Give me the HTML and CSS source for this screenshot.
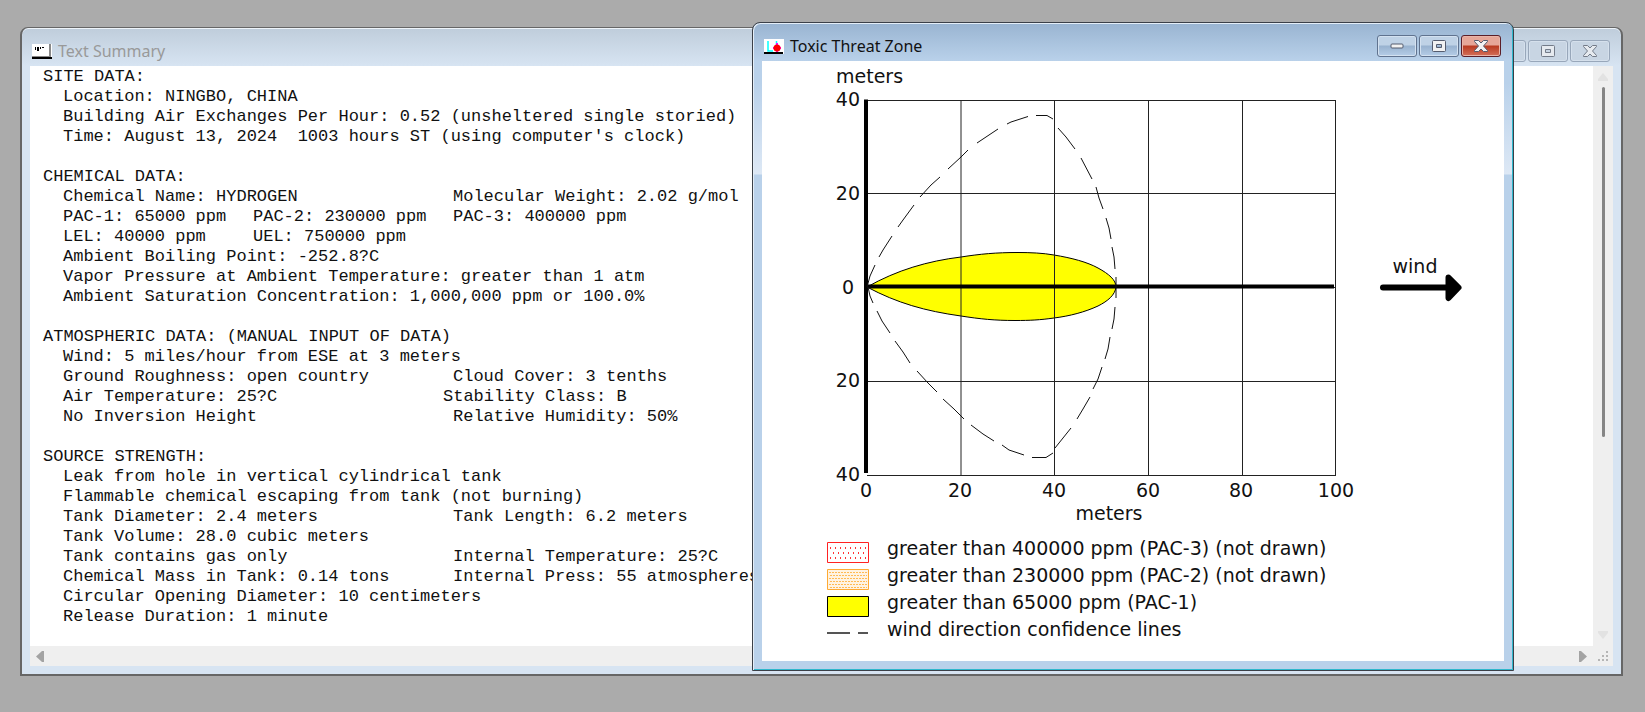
FILE: index.html
```html
<!DOCTYPE html>
<html lang="en">
<head>
<meta charset="utf-8">
<title>Toxic Threat Zone</title>
<link rel="stylesheet" href="styles.css">
</head>
<body>
<main class="desktop">
  <section class="window window-text">
    <header class="titlebar">
      <svg class="app-icon" width="20" height="15" viewBox="0 0 20 15" aria-hidden="true">
        <path fill="#fff" d="M0 0h20v15H0z"/><path fill="#888" d="M17 0h2v13H0v-1h17z"/><path fill="#000" d="M0 13h20v2H0zM3 3h1v3H3zM5 3h2v4H5zM8 3h1v2H8zM10 3h2v1h-2z"/>
      </svg>
      <h1 class="title">Text Summary</h1>
      <div class="controls">
        <button class="control" type="button" aria-label="Minimize"><svg width="14" height="6" viewBox="0 0 14 6"><rect class="glyph" x="1" y="1" width="12" height="4" rx="1"/></svg></button>
        <button class="control" type="button" aria-label="Maximize"><svg width="14" height="12" viewBox="0 0 14 12"><path class="glyph" fill-rule="evenodd" d="M1.500 .5h11q1 0 1 1v9q0 1-1 1h-11q-1 0-1-1v-9q0-1 1-1zM4.500 4.500h5v3h-5z"/></svg></button>
        <button class="control" type="button" aria-label="Close"><svg width="14" height="12" viewBox="0 0 14 12"><path class="glyph" d="M.5 .5h4L7 3l2.500-2.500h4v1L9.500 6l4 4.500v1h-4L7 9l-2.500 2.500h-4v-1L4.500 6l-4-4.500z"/></svg></button>
      </div>
    </header>
    <div class="client text-client">
      <article class="report">
        <h2>SITE DATA:</h2>
        <p>Location: NINGBO, CHINA</p>
        <p>Building Air Exchanges Per Hour: 0.52 (unsheltered single storied)</p>
        <p>Time: August 13, 2024&nbsp; 1003 hours ST (using computer's clock)</p>
        <h2>CHEMICAL DATA:</h2>
        <p><span class="wide">Chemical Name: HYDROGEN</span><span>Molecular Weight: 2.02 g/mol</span></p>
        <p><span class="first">PAC-1: 65000 ppm</span><span class="second">PAC-2: 230000 ppm</span><span>PAC-3: 400000 ppm</span></p>
        <p><span class="first">LEL: 40000 ppm</span><span>UEL: 750000 ppm</span></p>
        <p>Ambient Boiling Point: -252.8?C</p>
        <p>Vapor Pressure at Ambient Temperature: greater than 1 atm</p>
        <p>Ambient Saturation Concentration: 1,000,000 ppm or 100.0%</p>
        <h2>ATMOSPHERIC DATA: (MANUAL INPUT OF DATA)</h2>
        <p>Wind: 5 miles/hour from ESE at 3 meters</p>
        <p><span class="wide">Ground Roughness: open country</span><span>Cloud Cover: 3 tenths</span></p>
        <p><span class="wide wide-short">Air Temperature: 25?C</span><span>Stability Class: B</span></p>
        <p><span class="wide">No Inversion Height</span><span>Relative Humidity: 50%</span></p>
        <h2>SOURCE STRENGTH:</h2>
        <p>Leak from hole in vertical cylindrical tank</p>
        <p>Flammable chemical escaping from tank (not burning)</p>
        <p><span class="wide">Tank Diameter: 2.4 meters</span><span>Tank Length: 6.2 meters</span></p>
        <p>Tank Volume: 28.0 cubic meters</p>
        <p><span class="wide">Tank contains gas only</span><span>Internal Temperature: 25?C</span></p>
        <p><span class="wide">Chemical Mass in Tank: 0.14 tons</span><span>Internal Press: 55 atmospheres</span></p>
        <p>Circular Opening Diameter: 10 centimeters</p>
        <p>Release Duration: 1 minute</p>
      </article>
      <div class="vscroll">
        <svg width="10" height="8" viewBox="0 0 10 8"><path fill="#e2e2e2" d="M5 0l5 6v2H0V6z"/></svg>
        <div class="vtrack"><div class="vthumb"></div></div>
        <svg width="10" height="8" viewBox="0 0 10 8"><path fill="#e2e2e2" d="M5 8l5-6V0H0v2z"/></svg>
      </div>
      <div class="hscroll">
        <svg width="8" height="11" viewBox="0 0 8 11"><path fill="#a3a3a3" d="M0 5.500L6 0h2v11H6z"/></svg>
        <svg width="8" height="11" viewBox="0 0 8 11"><path fill="#a3a3a3" d="M8 5.500L2 0H0v11h2z"/></svg>
      </div>
      <div class="grip">
        <svg width="10" height="10" viewBox="0 0 10 10"><path fill="#b5b5b5" d="M8 0h2v2H8zM4 4h2v2H4zM8 4h2v2H8zM0 8h2v2H0zM4 8h2v2H4zM8 8h2v2H8z"/></svg>
      </div>
    </div>
  </section>

  <section class="window window-plot">
    <header class="titlebar">
      <svg class="app-icon" width="20" height="15" viewBox="0 0 20 15" aria-hidden="true">
        <path fill="#fff" d="M0 0h20v15H0z"/><path fill="none" stroke="#0ff" stroke-width="1.500" d="M4 2v10h5M12.500 2v4"/><path fill="#f0f" d="M12 4h2v10h-2zM9 8h8v2H9z"/><circle cx="13" cy="9" r="3.500" fill="#f00"/><path d="M0 13h19v2H0z"/>
      </svg>
      <h1 class="title">Toxic Threat Zone</h1>
      <div class="controls">
        <button class="control" type="button" aria-label="Minimize"><svg width="14" height="6" viewBox="0 0 14 6"><rect class="glyph" x="1" y="1" width="12" height="4" rx="1"/></svg></button>
        <button class="control" type="button" aria-label="Maximize"><svg width="14" height="12" viewBox="0 0 14 12"><path class="glyph" fill-rule="evenodd" d="M1.500 .5h11q1 0 1 1v9q0 1-1 1h-11q-1 0-1-1v-9q0-1 1-1zM4.500 4.500h5v3h-5z"/></svg></button>
        <button class="control control-close" type="button" aria-label="Close"><svg width="14" height="12" viewBox="0 0 14 12"><path class="glyph" d="M.5 .5h4L7 3l2.500-2.500h4v1L9.500 6l4 4.500v1h-4L7 9l-2.500 2.500h-4v-1L4.500 6l-4-4.500z"/></svg></button>
      </div>
    </header>
    <div class="client plot-client">
      <svg class="plot" viewBox="762 61 742 466" role="img" aria-label="Threat zone footprint in meters">
        <path fill="#ff0" stroke="#000" d="M867 287C897 270 928 261 961 257C980 254 996 252.500 1018 252.500C1030 252.500 1043 253 1054 255C1072 258 1087 262 1098 268C1109 274 1116 280 1116 287C1115 295 1108 301 1098 306C1085 312 1070 316 1054 318C1040 320 1030 320.500 1015 320.500C995 320.500 980 319 961 316C925 311 897 303 867 287Z"/>
        <path class="grid" d="M867 100.500H1336M867 193.500H1336M867 287.500H1336M867 381.500H1336M867 475.500H1336M961 100V475M1054.500 100V475M1148.500 100V475M1242.500 100V475M1335.500 100V475"/>
        <path fill="none" stroke="#000" stroke-width="4" d="M866 99.500V473M866 286.500H1334"/>
        <path fill="none" stroke="#111" d="M867 287L870 276L875 265M879 257L883 250L892 236M898 227L903 220L914 205M920 197L931 185L940 177M948 169L961 157L968 150M977 143L998 129M1007 124L1011 122L1028 116.500M1036 115.500H1047L1053 119M1058 128L1066 137L1075 149M1081 158L1092 179M1096 187L1099 198L1103 209M1106 218L1109 228L1111 239M1112 247L1114 257L1115 269M1116 277V298M868 287L870 296L873 303M877 311L882 321L890 333M895 341L903 352L910 363M917 371L928 383L937 392M943 399L954 409L964 419M971 425L983 434L994 441M1002 445L1009 450L1024 455M1032 457.500H1046L1053 453M1055 448L1071 428M1077 419L1083 409L1090 397M1093 389L1098 379L1102 367M1105 359L1108 349L1110 337M1112 329L1114 319L1115 307"/>
        <g class="label">
          <text x="836" y="83">meters</text>
          <text x="860" y="106" text-anchor="end">40</text>
          <text x="860" y="200" text-anchor="end">20</text>
          <text x="854" y="294" text-anchor="end">0</text>
          <text x="860" y="387" text-anchor="end">20</text>
          <text x="860" y="481" text-anchor="end">40</text>
          <g text-anchor="middle">
            <text x="866" y="497">0</text>
            <text x="960" y="497">20</text>
            <text x="1054" y="497">40</text>
            <text x="1148" y="497">60</text>
            <text x="1241" y="497">80</text>
            <text x="1336" y="497">100</text>
            <text x="1109" y="520">meters</text>
            <text x="1415" y="273">wind</text>
          </g>
        </g>
        <path fill="none" stroke="#000" stroke-width="6" stroke-linecap="round" d="M1383 287.500H1448"/>
        <path stroke="#000" stroke-width="6" stroke-linejoin="round" d="M1448.500 277.500L1458.500 287.500L1448.500 298Z"/>
      </svg>
      <ul class="legend">
        <li><svg class="swatch" width="42" height="21" viewBox="0 0 42 21"><path fill="none" stroke="#f33" stroke-width="2" stroke-dasharray="1 4" d="M3 6H40M6 11H38M3 16H40"/><path fill="none" stroke="#f22" d="M.5 .5h41v20H.5z"/></svg>greater than 400000 ppm (PAC-3) (not drawn)</li>
        <li><svg class="swatch" width="42" height="21" viewBox="0 0 42 21"><path fill="#fff3e2" stroke="#fa3" d="M.5 .5h41v20H.5z"/><path fill="none" stroke="#fb5" stroke-dasharray="2 1" d="M2 3.500H40M3 6.500H40M2 9.500H40M3 12.500H40M2 15.500H40M3 18.500H40"/></svg>greater than 230000 ppm (PAC-2) (not drawn)</li>
        <li><svg class="swatch" width="42" height="21" viewBox="0 0 42 21"><path fill="#ff0" stroke="#000" d="M.5 .5h41v20H.5z"/></svg>greater than 65000 ppm (PAC-1)</li>
        <li><svg class="swatch" width="42" height="2" viewBox="0 0 42 2"><path fill="#555" d="M0 0h23v2H0zM31 0h10v2H31z"/></svg>wind direction confidence lines</li>
      </ul>
    </div>
  </section>
</main>
</body>
</html>
```
FILE: styles.css
```css
* { box-sizing: border-box; }
body { margin: 0; background: #ababab; color: #111; }
h1, h2, p, ul { margin: 0; padding: 0; font-weight: normal; }

.desktop { position: relative; height: 100vh; min-height: 712px; overflow: hidden; }

.window {
  position: absolute;
  display: flex;
  flex-direction: column;
  padding: 0 8px 8px;
  border: 2px solid #666;
  border-radius: 8px 8px 0 0;
}
.window-text {
  inset: 27px 22px 36px 20px;
  border-width: 1px 2px 2px;
  background: linear-gradient(#bfcddb, #d7e4f2 38px);
  box-shadow: inset 0 1px #eef4fa;
}
.window-plot {
  inset: 22px 131px 41px 752px;
  border-color: #3b4048;
  border-width: 1px;
  padding: 0 9px 9px;
  background: linear-gradient(#99b4d1, #b9d1ea 38px, #b9d1ea 60px, #dde8f5 151px, #b9d1ea 152px);
  box-shadow: inset 1px 1px #e4eef8, inset -1px -1px #2fb7cc;
}

.titlebar { display: flex; align-items: center; gap: 6px; height: 38px; flex: none; padding: 8px 3px 0 2px; }
.title { flex: 1; font: 16px "Noto Sans", sans-serif; }
.window-text .title { color: #999; }
.window-plot .title { color: #111; }
.app-icon { flex: none; }
.controls { display: flex; gap: 2px; align-self: flex-start; padding-top: 4px; }
.control {
  display: flex;
  align-items: center;
  justify-content: center;
  width: 40px;
  height: 22px;
  padding: 0;
  border: 1px solid #60738f;
  border-radius: 3px;
  background: linear-gradient(#bfd2e6 45%, #98b2cf 50%, #b5cde7);
  box-shadow: inset 0 0 0 1px #d3e1f0;
}
.window-text .control { border-color: #98a7ba; background: #c8d5e3; box-shadow: inset 0 0 0 1px #d5e0ec; }
.window-plot .control-close { border-color: #5b1e28; background: linear-gradient(#e6a698 45%, #b93a20 50%, #d4705a); box-shadow: inset 0 0 0 1px #e9b4a8; }
.glyph { fill: #f2f2f2; stroke: #555c6e; }
.window-text .glyph { fill: #e6eaef; stroke: #737b88; }

.client { flex: 1; min-height: 0; background: #fff; }
.text-client { display: grid; grid-template: minmax(0, 1fr) 20px / minmax(0, 1fr) 20px; }

.report { padding: 1px 13px 0; overflow: hidden; font: 17px/20px "Liberation Mono", monospace; white-space: nowrap; }
.report h2 { font: inherit; }
.report p + h2 { margin-top: 20px; }
.report p { display: flex; padding-left: 20px; }
.first { width: 190px; }
.second { width: 200px; }
.wide { width: 390px; }
.wide-short { width: 380px; }

.vscroll, .hscroll, .grip { display: flex; align-items: center; background: #efefef; }
.vscroll { flex-direction: column; padding: 7px 0; }
.vtrack { flex: 1; padding: 6px 0; }
.vthumb { width: 3px; height: 65%; border-radius: 2px; background: #858585; }
.hscroll { justify-content: space-between; padding: 0 6px; }
.grip { justify-content: center; }

.plot-client { overflow: hidden; }
.plot { display: block; width: 100%; max-width: 742px; }
.grid { fill: none; stroke: #222; }
.label { font: 19px "DejaVu Sans", sans-serif; fill: #111; }

.legend { padding: 8px 0 0 65px; list-style: none; font: 19px/27px "DejaVu Sans", sans-serif; white-space: nowrap; }
.legend li { display: flex; align-items: center; gap: 18px; height: 27px; }
.swatch { flex: none; margin-top: 7px; }
```
